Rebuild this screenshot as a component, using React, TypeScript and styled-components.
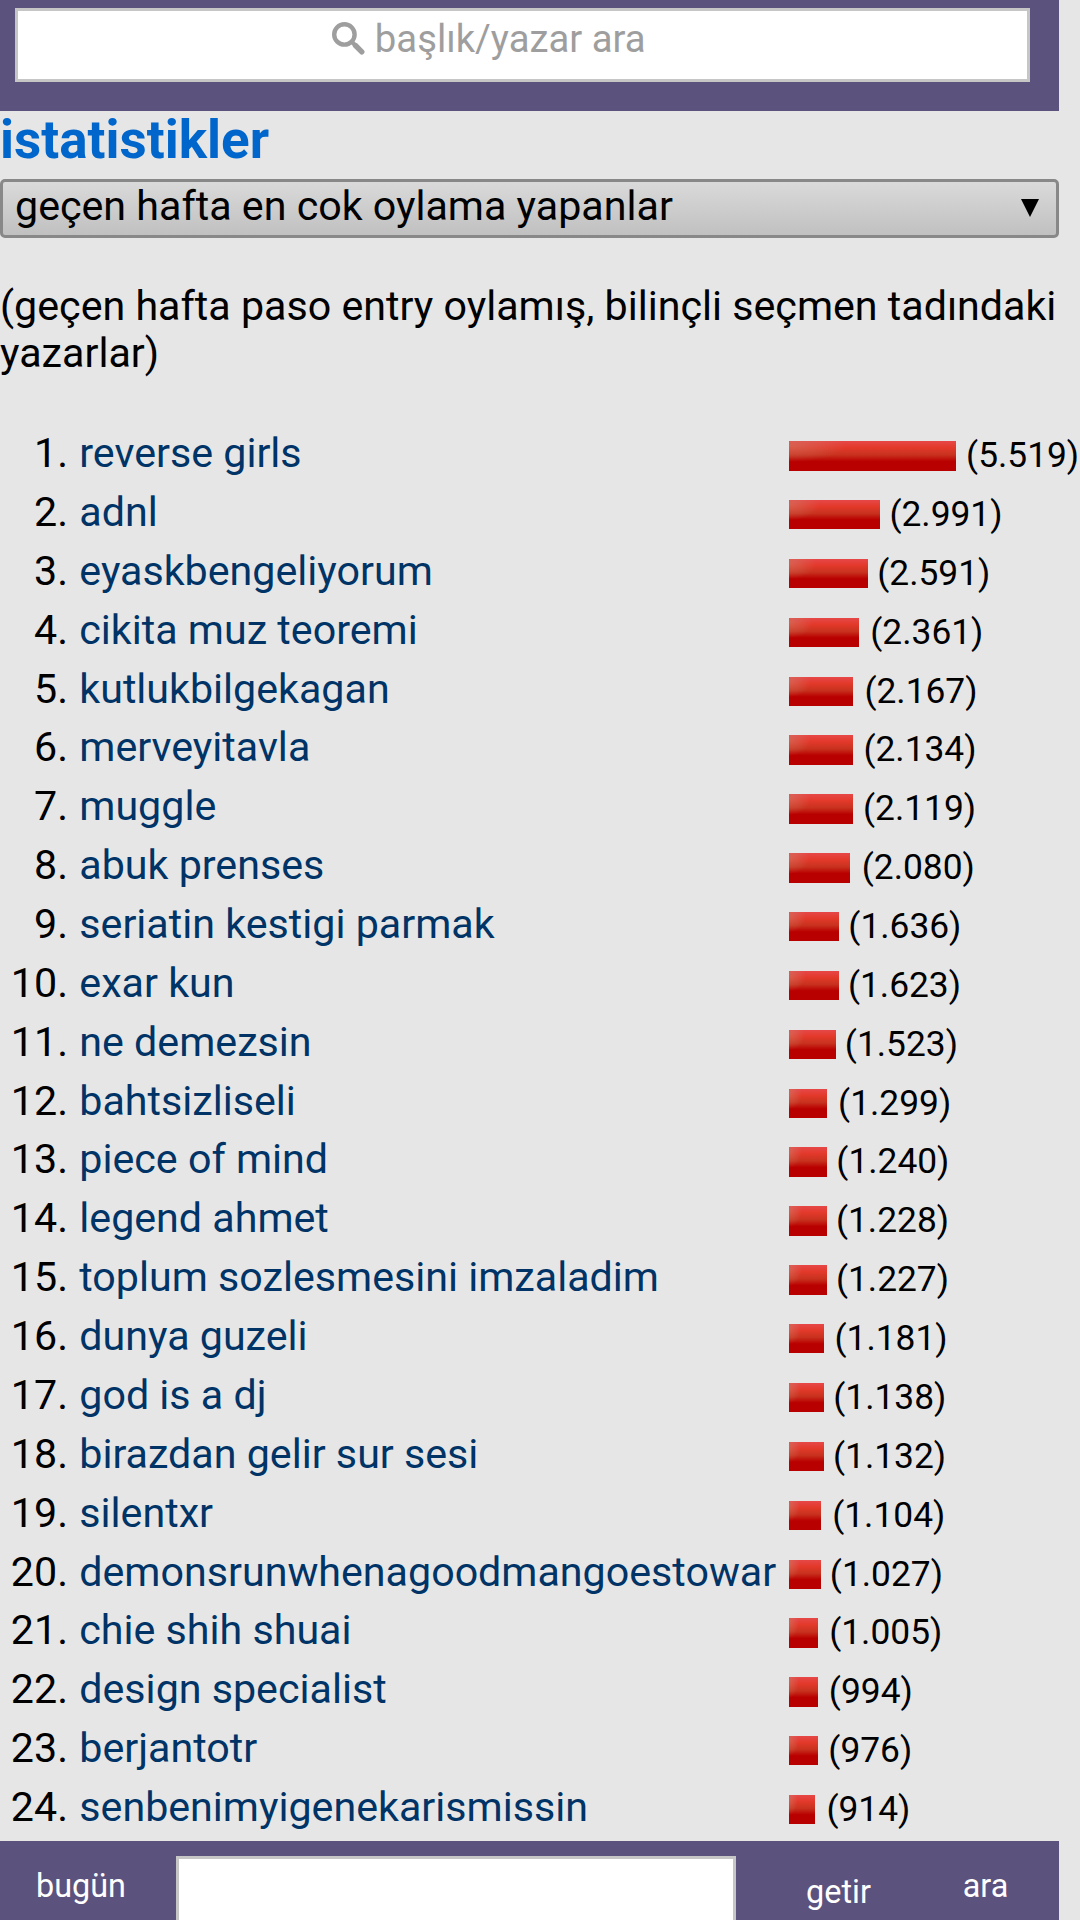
import React from "react";
import styled, { createGlobalStyle } from "styled-components";

const PX = 2.944;
const VALUE_SCALE = 0.0103;

const GlobalStyle = createGlobalStyle`
  html, body { margin: 0; padding: 0; background: #e6e6e6; }
  body { height: 1920px; overflow: hidden; }
  * { box-sizing: border-box; }
`;

const Page = styled.div`
  display: flex;
  flex-direction: column;
  width: 1080px;
  height: 1920px;
  overflow: hidden;
  background: #e6e6e6;
  color: #000;
  font-family: Roboto, "Liberation Sans", sans-serif;
  font-size: 41.2px;
  line-height: 47.1px;
`;

const Header = styled.header`
  flex: none;
  width: 1059px;
  height: 111px;
  padding: 8px 29px 0 15px;
  background: #5c527e;
`;

const SearchBox = styled.div`
  display: flex;
  align-items: flex-start;
  justify-content: center;
  gap: 9.5px;
  height: 74px;
  padding: 4px 67px 0 0;
  border: 3px solid #c6c6c6;
  background: #fff;
  color: #9e9e9e;
  font-size: 38.27px;
`;

const SearchIcon = styled.svg`
  width: 33px;
  height: 33px;
  margin-top: 7px;
`;

const Title = styled.h1`
  flex: none;
  margin: 0;
  height: 68px;
  padding-top: 1px;
  color: #0066cc;
  font-size: 53px;
  font-weight: 700;
  line-height: 56px;
`;

const Select = styled.div`
  flex: none;
  display: flex;
  justify-content: space-between;
  width: 1059px;
  height: 59px;
  padding: 0 17px 0 12px;
  border: 3px solid #888;
  border-radius: 5px;
  background: linear-gradient(#dadada, #c0c0c0);
  line-height: 48px;
`;

const Arrow = styled.svg`
  width: 18px;
  height: 18px;
  margin-top: 17px;
`;

const Description = styled.p`
  flex: none;
  width: 1060px;
  margin: 0;
  padding: 45.3px 0 46.7px;
`;

const List = styled.ol`
  flex: none;
  margin: 0;
  padding: 0;
  height: 1416.8px;
  overflow: hidden;
  list-style: none;
`;

const Row = styled.li`
  display: grid;
  grid-template-columns: 68px 700px 1fr;
  column-gap: 10.5px;
  height: 58.87px;
  line-height: 59.2px;
  white-space: nowrap;
`;

const Rank = styled.span`
  text-align: right;
`;

const Name = styled.a`
  padding-left: 0.8px;
  color: #003366;
`;

const Score = styled.div`
  display: flex;
  align-items: flex-start;
`;

const BarSlot = styled.div`
  flex: none;
  margin: 17px 9.7px 0 0;
`;

const Bar = styled.div`
  height: 29.4px;
  background:
    radial-gradient(ellipse 34% 55% at 0 15%, rgba(205, 125, 105, 0.55), rgba(205, 125, 105, 0)),
    linear-gradient(#e64848 0, #e3392b 22%, #c8321e 46%, #b90000 68%);
`;

const Count = styled.span`
  font-size: 35.33px;
  line-height: 62.4px;
`;

const Footer = styled.footer`
  flex: none;
  display: flex;
  width: 1059px;
  height: 80px;
  background: #5c527e;
  color: #fff;
  font-size: 32.38px;
  line-height: 42px;
`;

const FooterButton = styled.div<{ $width: number; $drop?: number }>`
  width: ${(p) => p.$width}px;
  padding-top: ${(p) => 24 + (p.$drop ?? 0)}px;
  text-align: center;
`;

const FooterInput = styled.div`
  width: 560px;
  margin: 15px 0 0 14px;
  border: 3px solid #c6c6c6;
  border-bottom: 0;
  background: #fff;
`;

const writers: [string, number][] = [
  ["reverse girls", 5519],
  ["adnl", 2991],
  ["eyaskbengeliyorum", 2591],
  ["cikita muz teoremi", 2361],
  ["kutlukbilgekagan", 2167],
  ["merveyitavla", 2134],
  ["muggle", 2119],
  ["abuk prenses", 2080],
  ["seriatin kestigi parmak", 1636],
  ["exar kun", 1623],
  ["ne demezsin", 1523],
  ["bahtsizliseli", 1299],
  ["piece of mind", 1240],
  ["legend ahmet", 1228],
  ["toplum sozlesmesini imzaladim", 1227],
  ["dunya guzeli", 1181],
  ["god is a dj", 1138],
  ["birazdan gelir sur sesi", 1132],
  ["silentxr", 1104],
  ["demonsrunwhenagoodmangoestowar", 1027],
  ["chie shih shuai", 1005],
  ["design specialist", 994],
  ["berjantotr", 976],
  ["senbenimyigenekarismissin", 914],
];

const formatCount = (n: number) => String(n).replace(/(\d)(\d{3})$/, "$1.$2");

export default function App() {
  return (
    <>
      <GlobalStyle />
      <Page>
        <Header>
          <SearchBox>
            <SearchIcon viewBox="0 0 33 33" fill="none" stroke="#9e9e9e">
              <circle cx="12.4" cy="12.4" r="10.2" strokeWidth="4.4" />
              <path d="M19.5 19.5 L24 24" strokeWidth="4" />
              <path d="M23.5 23.5 L29.8 29.8" strokeWidth="5.4" strokeLinecap="round" />
            </SearchIcon>
            <span>başlık/yazar ara</span>
          </SearchBox>
        </Header>
        <Title>istatistikler</Title>
        <Select>
          <span>geçen hafta en cok oylama yapanlar</span>
          <Arrow viewBox="0 0 18 18">
            <path d="M0 0H18L9 18Z" />
          </Arrow>
        </Select>
        <Description>
          (geçen hafta paso entry oylamış, bilinçli seçmen tadındaki yazarlar)
        </Description>
        <List>
          {writers.map(([name, value], i) => (
            <Row key={name}>
              <Rank>{i + 1}.</Rank>
              <Name>{name}</Name>
              <Score>
                <BarSlot style={{ width: value * VALUE_SCALE * PX }}>
                  <Bar style={{ width: Math.floor(Math.round(value * VALUE_SCALE) * PX) }} />
                </BarSlot>
                <Count>({formatCount(value)})</Count>
              </Score>
            </Row>
          ))}
        </List>
        <Footer>
          <FooterButton $width={162}>bugün</FooterButton>
          <FooterInput />
          <FooterButton $width={205} $drop={6}>getir</FooterButton>
          <FooterButton $width={89}>ara</FooterButton>
        </Footer>
      </Page>
    </>
  );
}
